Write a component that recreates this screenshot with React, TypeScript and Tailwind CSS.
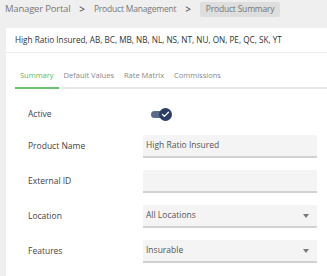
import { Check } from 'lucide-react'

const font = { fontFamily: '"Open Sans", "Noto Sans", sans-serif' }

type Field = { label: string; value: string; select?: boolean }

const FIELDS: Field[] = [
  { label: 'Product Name', value: 'High Ratio Insured' },
  { label: 'External ID', value: '' },
  { label: 'Location', value: 'All Locations', select: true },
  { label: 'Features', value: 'Insurable', select: true },
]

const TABS = ['Summary', 'Default Values', 'Rate Matrix', 'Commissions']

export default function App() {
  return (
    <div className="w-[327px] h-[276px] overflow-hidden bg-[#efefef] text-[#444]" style={font}>
      <div className="flex items-center h-[19px] pl-[5px] text-[8.5px] tracking-[-0.2px] text-[#777]">
        <span className="text-[9.5px]">Manager Portal</span>
        <span className="ml-[9px] mr-[9px] text-[#555] text-[10px] font-semibold">&gt;</span>
        <span>Product Management</span>
        <span className="ml-[9px] mr-[9px] text-[#555] text-[10px] font-semibold">&gt;</span>
        <span className="bg-[#dedede] rounded-[2px] px-[6px] py-[1.5px]">Product Summary</span>
      </div>
      <div className="ml-[6px] mt-[9px] bg-white h-[248px]">
        <div className="h-[25px] flex items-center pl-[9px] text-[8.2px] text-[#333] border-b border-[#ececec]">
          High Ratio Insured, AB, BC, MB, NB, NL, NS, NT, NU, ON, PE, QC, SK, YT
        </div>
        <div className="flex mt-[17px] ml-[9px] border-b-2 border-[#e8e8e8] text-[7.5px] text-[#888]">
          {TABS.map((t, i) => (
            <div
              key={t}
              className={`px-[5px] pb-[6px] -mb-[2px] ${i === 0 ? 'text-[#5cb85c] border-b-2 border-[#6cc070]' : ''}`}
            >
              {t}
            </div>
          ))}
        </div>
        <div className="pl-[22px] pr-[10px] text-[8.5px] text-[#444]">
          <div className="flex items-center h-[22px] mt-[14px]">
            <span className="w-[122px]">Active</span>
            <div className="relative w-[16px] h-[7px] rounded-full bg-[#5b6b8c] ml-[1px]">
              <div className="absolute -right-[5px] -top-[3px] w-[13px] h-[13px] rounded-full bg-[#2c3e66] flex items-center justify-center">
                <Check size={9} strokeWidth={3.5} color="white" />
              </div>
            </div>
          </div>
          {FIELDS.map((f, i) => (
            <div key={f.label} className={`flex items-center ${i === 0 ? 'mt-[10px]' : 'mt-[12px]'}`}>
              <span className="w-[115px]">{f.label}</span>
              <div className="flex-1 h-[23px] bg-[#f4f4f4] border-b-2 border-[#d2d2d2] rounded-t-[2px] flex items-center pl-[3px] pr-[8px] text-[#555]">
                <span className="flex-1">{f.value}</span>
                {f.select && (
                  <span className="w-0 h-0 border-l-[3.5px] border-r-[3.5px] border-t-[4px] border-l-transparent border-r-transparent border-t-[#777]" />
                )}
              </div>
            </div>
          ))}
        </div>
      </div>
    </div>
  )
}
